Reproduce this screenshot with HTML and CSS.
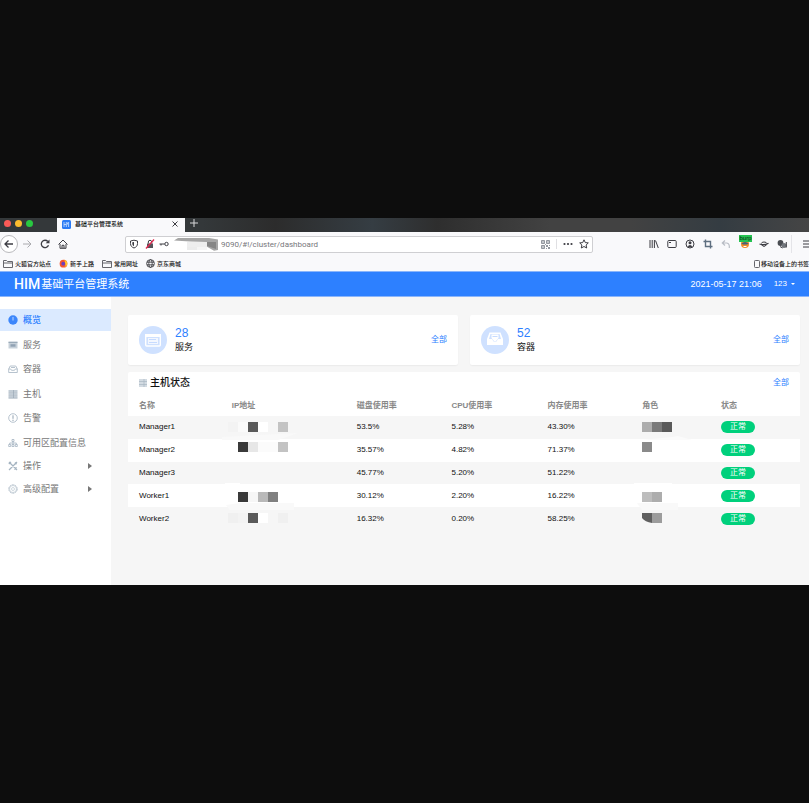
FILE: index.html
```html
<!DOCTYPE html>
<html lang="zh-CN">
<head>
<meta charset="utf-8">
<meta name="viewport" content="width=device-width, initial-scale=1">
<title>基础平台管理系统</title>
<link rel="stylesheet" href="styles.css">
</head>
<body>
<div class="window">
  <div class="tabstrip">
    <div class="lights"><span class="light red"></span><span class="light yellow"></span><span class="light green"></span></div>
    <div class="tab">
      <svg class="favicon" viewBox="0 0 9 9" width="9" height="9"><rect width="9" height="9" rx="1.5" fill="#2b7bf5"/><path d="M2 2v5M4.3 2v5M2 4.5h2.3M6.6 2v5M5.5 2.5v2" stroke="#cfe3ff" stroke-width=".8" fill="none"/></svg>
      <span class="tab-title">基础平台管理系统</span>
      <button class="icon-btn tab-close" aria-label="关闭"><svg viewBox="0 0 8 8" width="8" height="8"><path d="M1.5 1.5l5 5M6.500 1.5l-5 5" class="ln"/></svg></button>
    </div>
    <button class="icon-btn new-tab" aria-label="新标签页"><svg viewBox="0 0 8 8" width="8" height="8"><path d="M4 0v8M0 4h8" stroke="#d8d8da" fill="none"/></svg></button>
  </div>

  <div class="toolbar">
    <button class="icon-btn back" aria-label="后退"><svg viewBox="0 0 12 12" width="12" height="12"><path d="M10 6H2M5.500 2.500L2 6l3.500 3.500" class="ln thick"/></svg></button>
    <button class="icon-btn" aria-label="前进"><svg viewBox="0 0 12 12" width="12" height="12"><path d="M2 6h8M6.500 2.500L10 6l-3.500 3.500" class="ln pale"/></svg></button>
    <button class="icon-btn" aria-label="刷新"><svg viewBox="0 0 12 12" width="12" height="12"><path d="M9.500 7.200A3.700 3.700 0 1 1 8.800 3.500" class="ln thick"/><path d="M10.500 1.500v3.800H6.700z" fill="#3d3d43"/></svg></button>
    <button class="icon-btn" aria-label="主页"><svg viewBox="0 0 12 12" width="12" height="12"><path d="M1.500 6.500L6 2l4.500 4.500M3 6v4.300h6V6M5 10V7.300h2V10" class="ln"/></svg></button>
    <div class="urlbar">
      <button class="icon-btn in-url" aria-label="跟踪保护"><svg viewBox="0 0 10 10" width="10" height="10"><path d="M5 1.200L8.500 2v2.500C8.500 7 7 8.300 5 9 3 8.300 1.500 7 1.500 4.500V2z" class="ln"/><path d="M5 3v4.300C4 6.700 3.300 5.800 3.300 4.500V3.300z" fill="#3d3d43"/></svg></button>
      <button class="icon-btn in-url" aria-label="连接不安全"><svg viewBox="0 0 10 10" width="10" height="10"><path d="M2 4.500h6V9H2z" fill="#55555b"/><path d="M3.300 4.500V3a1.700 1.700 0 0 1 3.400 0v1.500" class="ln"/><path d="M1 9.500L9 .5" stroke="#e22850" stroke-width="1.300"/></svg></button>
      <button class="icon-btn key" aria-label="密码"><svg viewBox="0 0 10 8" width="10" height="8"><circle cx="7.500" cy="4" r="1.700" class="ln"/><path d="M5.700 4H.5M2 4v1.500" class="ln"/></svg></button>
      <svg class="smudge" viewBox="0 0 51 15" width="51" height="15"><path d="M17 5h10v8H17z" fill="#ececec"/><path d="M27 5h10v8H27z" fill="#f5f5f5"/><path d="M4 3.500L8 1h31l9 1.500V13l-4 .8-7-4V5L20 4.500z" fill="#a6a6a6"/><path d="M17 5h20v5H17z" fill="#eee"/><path d="M37 5h9v7l-9-3z" fill="#858585"/></svg>
      <input class="url" type="text" aria-label="地址" value="9090/#!/cluster/dashboard">
      <button class="icon-btn in-url" aria-label="二维码"><svg viewBox="0 0 9 9" width="9" height="9"><path d="M.5.5h3v3h-3zM5.500.5h3v3h-3zM.5 5.500h3v3h-3z" stroke="#92979f" fill="#c3c6cb"/><path d="M5 5h2v2H5zM7 7h2v2H7zM8 5h1v1H8zM5 8h1v1H5zM4 4h1v1H4z" fill="#92979f"/></svg></button>
      <span class="url-sep"></span>
      <button class="icon-btn in-url" aria-label="页面操作"><svg viewBox="0 0 10 10" width="10" height="10"><circle cx="1.500" cy="5" r="1.100" fill="#3d3d43"/><circle cx="5" cy="5" r="1.100" fill="#3d3d43"/><circle cx="8.500" cy="5" r="1.100" fill="#3d3d43"/></svg></button>
      <button class="icon-btn in-url" aria-label="收藏"><svg viewBox="0 0 10 10" width="10" height="10"><path d="M5 .8l1.300 2.800 3 .3-2.200 2.100.6 3L5 7.500 2.300 9l.6-3L.7 3.900l3-.3z" class="ln"/></svg></button>
    </div>
    <div class="tools">
      <button class="icon-btn" aria-label="书库"><svg viewBox="0 0 10 10" width="10" height="10"><path d="M1 1v8M3.200 1v8M5.400 1v8M6.500 1.500L9.300 9" class="ln"/></svg></button>
      <button class="icon-btn" aria-label="侧栏"><svg viewBox="0 0 10 10" width="10" height="10"><rect x=".8" y="1.500" width="8.400" height="7" rx="1" class="ln"/><path d="M2 3.500h2" class="ln"/></svg></button>
      <button class="icon-btn" aria-label="账户"><svg viewBox="0 0 10 10" width="10" height="10"><circle cx="5" cy="5" r="4" class="ln"/><circle cx="5" cy="3.800" r="1.500" fill="#3d3d43"/><path d="M2.500 7.500q2.500-3 5 0L5 8.600z" fill="#3d3d43"/></svg></button>
      <button class="icon-btn" aria-label="截图"><svg viewBox="0 0 10 10" width="10" height="10"><path d="M.5 2.500h7v7M2.500.5v7h7" stroke="#5f6f80" stroke-width="1.400" fill="none"/></svg></button>
      <button class="icon-btn" aria-label="撤销"><svg viewBox="0 0 10 10" width="10" height="10"><path d="M4 1.500L1.300 4 4 6.500M1.500 4h4.300q3 .5 2.500 5" stroke="#b9bdc5" stroke-width="1.200" fill="none"/></svg></button>
      <button class="icon-btn burp" aria-label="代理"><svg viewBox="0 0 10 10" width="10" height="10"><circle cx="5" cy="5" r="4" fill="#f28c28"/><path d="M1.300 4.500q3.700-3 7.400 0L7 5.500H3z" fill="#47637a"/><path d="M3.500 7.500h3" stroke="#fff"/></svg><span class="badge">burp</span></button>
      <button class="icon-btn" aria-label="扩展"><svg viewBox="0 0 10 10" width="10" height="10"><path d="M2.500 4.500q0-1.500 2.500-1.500t3 1.500" class="ln"/><path d="M.5 5q4.500 1.800 9-.7" class="ln thick"/><path d="M2.500 6q2.500 3 5 0" class="ln"/></svg></button>
      <button class="icon-btn" aria-label="调试"><svg viewBox="0 0 10 10" width="10" height="10"><circle cx="3.500" cy="4" r="2.900" fill="#4a4d52"/><circle cx="7" cy="6.500" r="2.500" fill="#73777d"/><path d="M9.300 3v5.500M3 7.500l2.500 1.500" class="ln"/></svg></button>
      <button class="icon-btn menu" aria-label="菜单"><svg viewBox="0 0 10 10" width="10" height="10"><path d="M0 2h10M0 5h10M0 8h10" class="ln"/></svg></button>
    </div>
  </div>

  <div class="bookmarks">
    <a href="#"><svg viewBox="0 0 10 8" width="10" height="8"><path d="M.5 7.500v-7h3l1 1h5v6zM.5 3h9" class="folder"/></svg>火狐官方站点</a>
    <a href="#"><svg viewBox="0 0 10 10" width="9" height="9"><circle cx="5" cy="5.200" r="4.300" fill="#f5532f"/><path d="M6 .5q3.500 2 3.300 5T6 9.300q2-2 1-4z" fill="#ffc52e"/><circle cx="4.700" cy="5.200" r="2.100" fill="#6a3fc0"/></svg>新手上路</a>
    <a href="#"><svg viewBox="0 0 10 8" width="10" height="8"><path d="M.5 7.500v-7h3l1 1h5v6zM.5 3h9" class="folder"/></svg>常用网址</a>
    <a href="#"><svg viewBox="0 0 10 10" width="9" height="9"><circle cx="5" cy="5" r="4.300" class="ln"/><ellipse cx="5" cy="5" rx="1.900" ry="4.300" class="ln"/><path d="M1 3.500h8M1 6.500h8" class="ln"/></svg>京东商城</a>
    <a href="#" class="mobile"><svg viewBox="0 0 6 8" width="6" height="8"><rect x=".5" y=".5" width="5" height="7" rx=".8" class="folder"/></svg>移动设备上的书签</a>
  </div>

  <header class="app-header">
    <h1><span class="brand">HIM</span>基础平台管理系统</h1>
    <time>2021-05-17 21:06</time>
    <button class="user">123<span class="caret"></span></button>
  </header>

  <div class="app-body">
    <nav class="sidebar">
      <div class="nav-main">
        <a href="#" class="active"><svg viewBox="0 0 10 10"><circle cx="5" cy="5" r="4.700" fill="#3c86fb"/><path d="M5 2v3.500" stroke="#b8d5ff" stroke-width="1"/></svg>概览</a>
        <a href="#"><svg viewBox="0 0 10 10"><path d="M.5 1.700h9v6.800h-9z" fill="#c6d0d9"/><path d="M.5 2.300h9" stroke="#8fa0b0"/><path d="M2.500 4.200h5v2.500h-5z" fill="#91a2b3"/></svg>服务</a>
        <a href="#"><svg viewBox="0 0 10 10"><path d="M.7 5l1.500-3h5.600l1.500 3v3.500H.7zM.7 5h2l.8 1.300h3L7.300 5h2M3 3.500h4" class="si"/></svg>容器</a>
        <a href="#"><svg viewBox="0 0 10 10"><path d="M.5 1h9v2h-9zM.5 4h9v2h-9zM.5 7h9v2h-9z" fill="#c3cdd6"/><path d="M.5 3.500h9M.5 6.500h9M.5 9.300h9M5.500 1v8" stroke="#93a3b2" stroke-width=".6"/></svg>主机</a>
        <a href="#"><svg viewBox="0 0 10 10"><circle cx="5" cy="5" r="4.300" class="si"/><path d="M5 2.300v3.500M5 6.700V8" stroke="#8fa0b0"/></svg>告警</a>
        <a href="#"><svg viewBox="0 0 10 10"><path d="M4 1.500h2v2H4zM.7 6.500h2v2h-2zM4 6.500h2v2H4zM7.300 6.500h2v2h-2zM5 3.500v3M1.700 6.500V5h6.600v1.500" class="si"/></svg>可用区配置信息</a>
      </div>
      <div class="nav-more">
        <a href="#"><svg viewBox="0 0 10 10"><path d="M1 1l8 8M9 1L1 9M.8 3L3 .8M7 1.500L8.700 3.200M6.500 8.700L8.700 6.500" stroke="#a5b4c1" stroke-width="1.200" fill="none"/></svg>操作<span class="arrow"></span></a>
        <a href="#"><svg viewBox="0 0 10 10"><circle cx="5" cy="5" r="4.200" class="si" stroke-dasharray="2 .6"/><circle cx="5" cy="5" r="3.500" class="si thin"/><circle cx="5" cy="5" r="1.500" class="si thin"/></svg>高级配置<span class="arrow"></span></a>
      </div>
    </nav>

    <main>
      <section class="cards">
        <article class="card">
          <svg class="disc" viewBox="0 0 28 28" width="28" height="28"><circle cx="14" cy="14" r="14" fill="#cfe1ff"/><rect x="6.700" y="8.700" width="14.600" height="11.300" rx="1" fill="none" stroke="#fff" stroke-width="1.400"/><path d="M6 8h16v3H6z" fill="#fff"/><path d="M9 12h10v6H9z" fill="#f3f7ff"/><path d="M10 13.500h7M10 16.500h8" stroke="#c6dbff"/></svg>
          <div class="stat"><strong>28</strong><span>服务</span></div>
          <a href="#" class="all">全部</a>
        </article>
        <article class="card">
          <svg class="disc" viewBox="0 0 28 28" width="28" height="28"><circle cx="14" cy="14" r="14" fill="#cfe1ff"/><path d="M6 13L8.500 6.500h11L22 13v6H6z" fill="#fff"/><path d="M9.500 8h9l1.500 5h-3l-1.500 2.500h-3L11 13H8z" fill="#cfe1ff"/><path d="M10.500 8.500h7V12l-2.500 3h-2l-2.500-3z" fill="#fff"/><path d="M11.500 10.500h5" stroke="#c6dbff"/></svg>
          <div class="stat"><strong>52</strong><span>容器</span></div>
          <a href="#" class="all">全部</a>
        </article>
      </section>

      <section class="panel">
        <div class="panel-head">
          <svg viewBox="0 0 8 8" width="8" height="8"><path d="M0 0h8v8H0z" fill="#d3dbe2"/><path d="M0 2.500h8M0 5.500h8M5 0v8" stroke="#a9b7c3" stroke-width=".7"/></svg>
          <h2>主机状态</h2>
          <a href="#" class="all">全部</a>
        </div>
        <table>
          <colgroup><col class="c1"><col class="c2"><col class="c3"><col class="c4"><col class="c5"><col class="c6"><col class="c7"></colgroup>
          <thead><tr><th>名称</th><th>IP地址</th><th>磁盘使用率</th><th>CPU使用率</th><th>内存使用率</th><th>角色</th><th>状态</th></tr></thead>
          <tbody>
            <tr><td>Manager1</td>
              <td><svg class="mosaic" viewBox="0 0 70 23" width="70" height="23"><path d="M-4 5h10v10H-4z" fill="#f3f3f3"/><path d="M6 5h10v10H6z" fill="#fafafa"/><path d="M16 5h10v10H16z" fill="#5a5a5a"/><path d="M26 5h10v10H26z" fill="#fff"/><path d="M46 5h10v10H46z" fill="#c3c3c3"/><path d="M-10 20l76-4-20 7h-56z" fill="#f9f9f9"/></svg></td>
              <td>53.5%</td><td>5.28%</td><td>43.30%</td>
              <td><svg class="mosaic" viewBox="0 0 70 23" width="70" height="23"><path d="M0 5h10v10H0z" fill="#adadad"/><path d="M10 5h10v10H10z" fill="#7a7a7a"/><path d="M20 5h10v10H20z" fill="#5a5a5a"/><path d="M30 20l6-1 14 4H0z" fill="#fbfbfb"/></svg></td>
              <td><span class="pill">正常</span></td></tr>
            <tr><td>Manager2</td>
              <td><svg class="mosaic" viewBox="0 0 70 23" width="70" height="23"><path d="M6 2h10v10H6z" fill="#3a3a3a"/><path d="M16 2h10v10H16z" fill="#e7e7e7"/><path d="M26 2h20v10H26z" fill="#fbfbfb"/><path d="M46 2h10v10H46z" fill="#c3c3c3"/></svg></td>
              <td>35.57%</td><td>4.82%</td><td>71.37%</td>
              <td><svg class="mosaic" viewBox="0 0 70 23" width="70" height="23"><path d="M0 2h10v10H0z" fill="#8a8a8a"/></svg></td>
              <td><span class="pill">正常</span></td></tr>
            <tr><td>Manager3</td>
              <td><svg class="mosaic" viewBox="0 0 70 23" width="70" height="23"><path d="M-7 20H8v2H-7z" fill="#fff"/></svg></td>
              <td>45.77%</td><td>5.20%</td><td>51.22%</td>
              <td><svg class="mosaic" viewBox="0 0 70 23" width="70" height="23"><path d="M-8 20h38v2H-8z" fill="#fff"/></svg></td>
              <td><span class="pill">正常</span></td></tr>
            <tr><td>Worker1</td>
              <td><svg class="mosaic" viewBox="0 0 70 23" width="70" height="23"><path d="M6 7h10v10H6z" fill="#3a3a3a"/><path d="M16 7h10v10H16z" fill="#f6f6f6"/><path d="M26 7h10v10H26z" fill="#b9b9b9"/><path d="M36 7h10v10H36z" fill="#808080"/><path d="M-6 20l14-2h54v7H-2z" fill="#f9f9f9"/></svg></td>
              <td>30.12%</td><td>2.20%</td><td>16.22%</td>
              <td><svg class="mosaic" viewBox="0 0 70 23" width="70" height="23"><path d="M0 7h10v10H0z" fill="#bdbdbd"/><path d="M10 7h10v10H10z" fill="#adadad"/><path d="M-5 18h41v7H0z" fill="#f9f9f9"/></svg></td>
              <td><span class="pill">正常</span></td></tr>
            <tr><td>Worker2</td>
              <td><svg class="mosaic" viewBox="0 0 70 23" width="70" height="23"><path d="M-4 5H6v10H-4z" fill="#f0f0f0"/><path d="M6 5h10v10H6z" fill="#f3f3f3"/><path d="M16 5h10v10H16z" fill="#5a5a5a"/><path d="M26 5h10v10H26z" fill="#fff"/><path d="M46 5h10v10H46z" fill="#f0f0f0"/></svg></td>
              <td>16.32%</td><td>0.20%</td><td>58.25%</td>
              <td><svg class="mosaic" viewBox="0 0 70 23" width="70" height="23"><path d="M0 5h10v10Q3 14 0 10z" fill="#5f5f5f"/><path d="M10 5h10v10H10z" fill="#9c9c9c"/></svg></td>
              <td><span class="pill">正常</span></td></tr>
          </tbody>
        </table>
      </section>
    </main>
  </div>
</div>
</body>
</html>
```
FILE: styles.css
```css
* { box-sizing: border-box; }

body {
  margin: 0;
  min-height: 100vh;
  display: flex;
  flex-direction: column;
  justify-content: center;
  background: #0d0d0d;
  color: #111;
  font-family: "Liberation Sans", "Noto Sans CJK SC", sans-serif;
  font-size: 8px;
  line-height: 12px;
}

a { color: inherit; text-decoration: none; }
button, input { font: inherit; color: inherit; border: 0; padding: 0; background: none; }
svg { display: block; flex: none; }

.window { overflow: hidden; background: #f9f9fb; }
.ln { fill: none; stroke: #3d3d43; stroke-width: 1; }
.thick { stroke-width: 1.3; }
.pale { stroke: #aaaaae; }
.folder { fill: none; stroke: #66666c; stroke-width: 1; }
.icon-btn {
  flex: none;
  display: flex;
  align-items: center;
  justify-content: center;
  width: 18px;
  height: 18px;
}

/* Browser tabs */
.tabstrip {
  display: flex;
  height: 14px;
  background: linear-gradient(90deg, #34383a 0%, #34383a 25%, #2c2c2c 34%, #353d43 46%, #2e2e2e 54%, #424242 68%, #424242 78%, #343c42 89%, #454545 100%);
}
.lights { display: flex; gap: 4px; width: 57px; padding: 2px 4px; }
.light { width: 7px; height: 7px; border-radius: 50%; }
.red { background: #fc5b57; }
.yellow { background: #fdbc2e; }
.green { background: #28c840; }
.tab {
  display: flex;
  align-items: center;
  gap: 4px;
  width: 128px;
  padding: 0 6px 2px 5px;
  background: #f9f9fb;
}
.tab-title, .bookmarks { font-size: 6px; font-weight: 500; color: #111; }
.tab-close { width: 8px; height: 8px; margin-left: auto; }
.new-tab { height: 10px; }

/* Browser toolbar */
.toolbar { display: flex; align-items: center; height: 24px; }
.back { height: 18px; border: 1px solid #b9b9bc; border-radius: 50%; background: #fff; }
.urlbar {
  flex: 1;
  min-width: 0;
  display: flex;
  align-items: center;
  height: 17px;
  margin: 0 52px 0 53px;
  border: 1px solid #cfcfd2;
  border-radius: 2px;
  background: #fff;
}
.in-url { width: 16px; height: 15px; }
.key { width: 12px; height: 15px; }
.url {
  flex: 1;
  min-width: 0;
  height: 15px;
  color: #77777b;
  font-family: Roboto, sans-serif;
}
.url-sep { width: 1px; height: 10px; margin: 0 3px; background: #e0e0e3; }
.tools { display: flex; align-items: center; flex: none; }
.burp { position: relative; width: 20px; }
.badge {
  position: absolute;
  top: 0;
  left: 4px;
  width: 13px;
  height: 7px;
  background: #25c252;
  color: #06290f;
  font-size: 6px;
  line-height: 6px;
  text-align: center;
}
.menu { border-left: 1px solid #e4e4e8; padding-left: 11px; justify-content: flex-start; }

.bookmarks {
  display: flex;
  align-items: center;
  gap: 8px;
  height: 15px;
  padding-left: 3px;
  white-space: nowrap;
}
.bookmarks a { display: flex; align-items: center; gap: 2px; flex: none; }
.bookmarks .mobile { gap: 1px; margin-left: auto; }

/* Application header */
.app-header {
  display: flex;
  align-items: center;
  height: 26px;
  padding: 0 14px;
  border-top: 1px solid #8ab5fb;
  border-bottom: 1px solid #8ab5fb;
  background: #2d80ff;
  color: #fff;
}
h1 {
  display: flex;
  align-items: center;
  gap: 1px;
  margin: 0 auto 0 0;
  font-size: 11px;
  font-weight: 400;
  line-height: 16px;
}
.brand { font-family: Roboto, sans-serif; font-size: 14px; font-weight: 500; }
time { font-size: 9px; }
.user { display: flex; align-items: center; gap: 4px; margin-left: 12px; }
.caret { border: 2px solid transparent; border-top-color: #fff; border-bottom: 0; }

/* Application body */
.app-body { display: flex; min-height: 288px; background: #f6f6f6; }
.sidebar {
  flex: none;
  width: 111px;
  padding-top: 12px;
  background: #fff;
  color: #777;
  font-size: 9px;
}
.sidebar a { display: flex; align-items: center; gap: 5px; height: 22px; padding: 0 19px 0 8px; }
.sidebar svg { width: 10px; height: 10px; }
.nav-main { display: flex; flex-direction: column; justify-content: space-between; height: 145px; }
.nav-more a { height: 23px; }
.sidebar .active { background: #dbeaff; color: #2d80ff; font-weight: 500; }
.si { fill: none; stroke: #a5b4c1; stroke-width: .8; }
.thin { stroke-width: .5; }
.arrow { margin-left: auto; border: 3px solid transparent; border-left: 4px solid #777; border-right: 0; }

main { flex: 1; min-width: 0; padding: 18px 9px 0 17px; }
.cards { display: grid; grid-template-columns: 1fr 1fr; gap: 12px; margin-bottom: 7px; }
.card {
  display: flex;
  align-items: center;
  gap: 8px;
  height: 50px;
  padding: 0 11px;
  border-radius: 2px;
  background: #fff;
  box-shadow: 0 1px 1px #ececec;
}
.stat { display: flex; flex-direction: column; font-size: 9px; line-height: 14px; }
.stat strong { color: #2d80ff; font-size: 12px; font-weight: 400; }
.all { margin-left: auto; color: #2d80ff; }

.panel { border-radius: 2px; background: #fff; }
.panel-head { display: flex; align-items: center; gap: 3px; height: 22px; padding: 0 11px; }
h2 { margin: 0; font-size: 10px; font-weight: 500; line-height: 14px; }

table { width: 100%; height: 136px; table-layout: fixed; border-collapse: collapse; }
.c1 { width: 13.8%; }
.c2 { width: 18.6%; }
.c3 { width: 14.1%; }
.c4 { width: 14.3%; }
.c5 { width: 14.1%; }
.c6 { width: 11.7%; }
.c7 { width: 13.4%; }
th { height: 22px; padding: 2px 0 0 11px; color: #888; font-weight: 700; text-align: left; }
td { position: relative; height: 22px; padding: 0 0 0 11px; }
tbody tr:nth-child(odd) { background: #f6f6f6; }
.mosaic { position: absolute; top: 1px; left: 11px; overflow: visible; }
.pill {
  display: block;
  width: 34px;
  height: 12px;
  border-radius: 6px;
  background: #00d07c;
  color: #fff;
  line-height: 12px;
  text-align: center;
}
```
